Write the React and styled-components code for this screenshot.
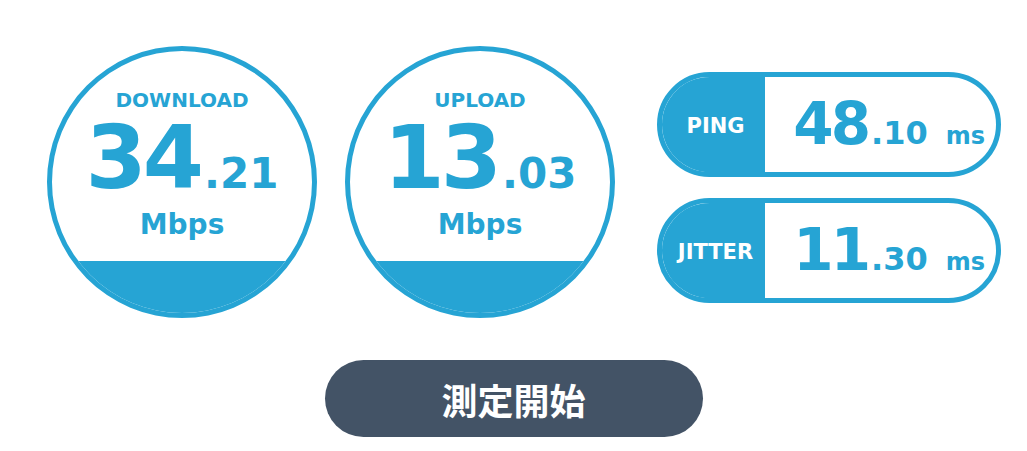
import React from 'react'
import styled, { createGlobalStyle } from 'styled-components'

const BLUE = '#26a4d4'

const GlobalStyle = createGlobalStyle`
  body{
    margin: 0;
    background: #fff;
    font-family: "DejaVu Sans", "Noto Sans CJK JP", sans-serif;
  }
`

const Page = styled.main`
  width: 1027px;
  padding-top: 46px;
  display: flex;
  flex-direction: column;
`

const Row = styled.section`
  display: flex;
  align-items: flex-start;
  padding-left: 47px;
  gap: 28px;
`

const Gauge = styled.div`
  box-sizing: border-box;
  width: 270px;
  height: 272px;
  border: 5px solid ${BLUE};
  border-radius: 50%;
  overflow: hidden;
  display: flex;
  flex-direction: column;
  align-items: center;
  padding-top: 37px;
  color: ${BLUE};
  font-weight: 700;
`

const GaugeLabel = styled.div`
  font-size: 20px;
  line-height: 24px;
`

const BigNumber = styled.div`
  margin-top: 6px;
  font-size: 88px;
  line-height: 80px;
  letter-spacing: -4px;
  span{
    font-size: 42px;
    line-height: 1;
    letter-spacing: 0;
    margin-left: 4px;
  }
`

const Unit = styled.div`
  margin-top: 11px;
  font-size: 28px;
  line-height: 32px;
`

const Fill = styled.div`
  margin-top: auto;
  width: 100%;
  height: 52px;
  background: ${BLUE};
`

const Side = styled.div`
  margin-left: 14px;
  margin-top: 26px;
  display: flex;
  flex-direction: column;
  gap: 21px;
`

const Pill = styled.div`
  box-sizing: border-box;
  width: 344px;
  height: 105px;
  border: 5px solid ${BLUE};
  border-radius: 53px;
  overflow: hidden;
  display: flex;
  font-weight: 700;
`

const PillLabel = styled.div`
  box-sizing: border-box;
  flex: 0 0 103px;
  background: ${BLUE};
  color: #fff;
  font-size: 21px;
  display: flex;
  align-items: center;
  justify-content: center;
  padding: 2px 0 0 4px;
`

const PillValue = styled.div`
  flex: 1;
  display: flex;
  align-items: baseline;
  justify-content: flex-end;
  padding: 18px 11px 0 0;
  color: ${BLUE};
  line-height: 1;
`

const PillInt = styled.span`
  font-size: 58px;
  letter-spacing: -3px;
`

const PillDec = styled.span`
  font-size: 32px;
  margin-left: 3px;
`

const PillUnit = styled.span`
  font-size: 24px;
  margin-left: 18px;
`

const StartButton = styled.button`
  align-self: center;
  margin-top: 42px;
  width: 378px;
  height: 77px;
  border: none;
  border-radius: 39px;
  background: #435366;
  color: #fff;
  font-family: "Noto Sans CJK JP", sans-serif;
  font-weight: 700;
  font-size: 36px;
  display: flex;
  align-items: center;
  justify-content: center;
  cursor: pointer;
`

function SpeedGauge({ label, int, dec }) {
  return (
    <Gauge>
      <GaugeLabel>{label}</GaugeLabel>
      <BigNumber>{int}<span>.{dec}</span></BigNumber>
      <Unit>Mbps</Unit>
      <Fill />
    </Gauge>
  )
}

function StatPill({ label, int, dec }) {
  return (
    <Pill>
      <PillLabel>{label}</PillLabel>
      <PillValue>
        <PillInt>{int}</PillInt>
        <PillDec>.{dec}</PillDec>
        <PillUnit>ms</PillUnit>
      </PillValue>
    </Pill>
  )
}

export default function App() {
  return (
    <>
      <GlobalStyle />
      <Page>
        <Row>
          <SpeedGauge label="DOWNLOAD" int="34" dec="21" />
          <SpeedGauge label="UPLOAD" int="13" dec="03" />
          <Side>
            <StatPill label="PING" int="48" dec="10" />
            <StatPill label="JITTER" int="11" dec="30" />
          </Side>
        </Row>
        <StartButton>測定開始</StartButton>
      </Page>
    </>
  )
}
